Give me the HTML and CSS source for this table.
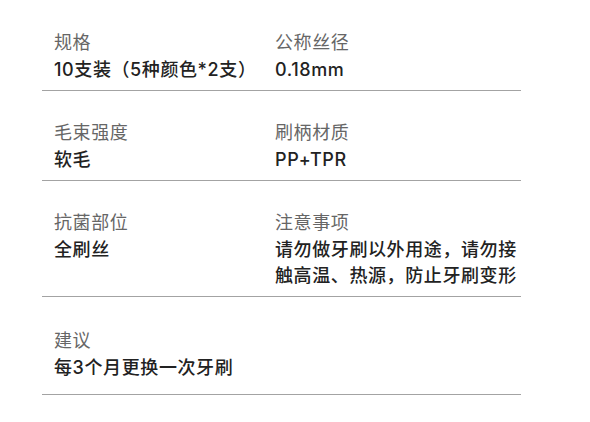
FILE: index.html
```html
<!DOCTYPE html>
<html lang="zh-CN">
<head>
<meta charset="utf-8">
<title>规格参数</title>
<link rel="stylesheet" href="styles.css">
</head>
<body>
<div class="specs">
  <div class="row">
    <div class="cell">
      <div class="label">规格</div>
      <div class="value">10支装（5种颜色*2支）</div>
    </div>
    <div class="cell">
      <div class="label">公称丝径</div>
      <div class="value">0.18mm</div>
    </div>
  </div>
  <div class="row">
    <div class="cell">
      <div class="label">毛束强度</div>
      <div class="value">软毛</div>
    </div>
    <div class="cell">
      <div class="label">刷柄材质</div>
      <div class="value">PP+TPR</div>
    </div>
  </div>
  <div class="row">
    <div class="cell">
      <div class="label">抗菌部位</div>
      <div class="value">全刷丝</div>
    </div>
    <div class="cell">
      <div class="label">注意事项</div>
      <div class="value">请勿做牙刷以外用途，请勿接触高温、热源，防止牙刷变形</div>
    </div>
  </div>
  <div class="row row-last">
    <div class="cell">
      <div class="label">建议</div>
      <div class="value">每3个月更换一次牙刷</div>
    </div>
  </div>
</div>
</body>
</html>
```
FILE: styles.css
```css
html, body {
  margin: 0;
  padding: 0;
  background: #ffffff;
}
body {
  font-family: Inter, "Noto Sans CJK SC", sans-serif;
  font-size: 18px;
}
.specs {
  width: 479px;
  margin-left: 42px;
  padding-top: 1px;
}
.row {
  display: grid;
  grid-template-columns: 221px 1fr;
  padding: 28px 0 7px 12px;
  border-bottom: 1px solid #a3a3a3;
}
.row-last {
  padding-top: 30px;
  padding-bottom: 13px;
}
.label {
  color: #666666;
  line-height: 28px;
  letter-spacing: 0.6px;
}
.value {
  color: #222222;
  font-weight: 500;
  line-height: 26px;
  letter-spacing: 0.6px;
  text-spacing-trim: space-all;
}
```
